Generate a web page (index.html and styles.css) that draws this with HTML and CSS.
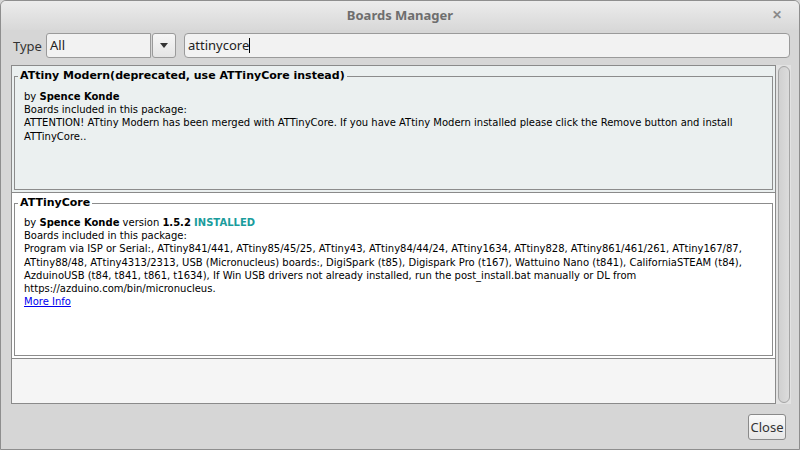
FILE: index.html
```html
<!DOCTYPE html>
<html>
<head>
<meta charset="utf-8">
<link rel="stylesheet" href="styles.css">
</head>
<body>
<div class="window">
  <div class="titlebar">
    <span class="title">Boards Manager</span>
    <span class="xbtn">✕</span>
  </div>
  <div class="toolbar">
    <span class="type-label">Type</span>
    <div class="combo">
      <div class="combo-field">All</div>
      <div class="combo-btn"><span class="arrow"></span></div>
    </div>
    <div class="search">attinycore<span class="caret"></span></div>
  </div>
  <div class="list-row">
    <div class="list">
      <div class="item item-deprecated">
        <fieldset class="pkg pkg-1">
          <legend>ATtiny Modern(deprecated, use ATTinyCore instead)</legend>
          <div class="pkg-body">
            <div>by <b>Spence Konde</b></div>
            <div>Boards included in this package:</div>
            <div>ATTENTION! ATtiny Modern has been merged with ATTinyCore. If you have ATtiny Modern installed please click the Remove button and install ATTinyCore..</div>
          </div>
        </fieldset>
      </div>
      <div class="item item-installed">
        <fieldset class="pkg pkg-2">
          <legend>ATTinyCore</legend>
          <div class="pkg-body">
            <div>by <b>Spence Konde</b> version <b>1.5.2</b> <b class="installed">INSTALLED</b></div>
            <div>Boards included in this package:</div>
            <div>Program via ISP or Serial:, ATtiny841/441, ATtiny85/45/25, ATtiny43, ATtiny84/44/24, ATtiny1634, ATtiny828, ATtiny861/461/261, ATtiny167/87, ATtiny88/48, ATtiny4313/2313, USB (Micronucleus) boards:, DigiSpark (t85), Digispark Pro (t167), Wattuino Nano (t841), CaliforniaSTEAM (t84), AzduinoUSB (t84, t841, t861, t1634), If Win USB drivers not already installed, run the post_install.bat manually or DL from https://azduino.com/bin/micronucleus.</div>
            <div><a class="more" href="#">More Info</a></div>
          </div>
        </fieldset>
      </div>
      <div class="item item-empty"></div>
    </div>
    <div class="scrollbar"><div class="track"></div></div>
  </div>
  <div class="footer">
    <button class="close">Close</button>
  </div>
</div>
</body>
</html>
```
FILE: styles.css
```css
html, body {
  margin: 0;
  padding: 0;
  width: 800px;
  height: 450px;
  overflow: hidden;
  background: #d6d6d6;
}
.window {
  box-sizing: border-box;
  width: 800px;
  height: 450px;
  border: 1px solid #8e8e8e;
  border-radius: 6px 6px 0 0;
  background: #d6d6d6;
  display: flex;
  flex-direction: column;
  font-family: "Noto Sans", "Open Sans", sans-serif;
}
.titlebar {
  height: 28px;
  padding-bottom: 1px;
  flex: none;
  display: flex;
  align-items: center;
  justify-content: center;
  position: relative;
  border-radius: 5px 5px 0 0;
  background: linear-gradient(#ececec, #d8d8d8);
}
.title {
  font-weight: bold;
  font-size: 13px;
  color: #6e6e6e;
}
.xbtn {
  position: absolute;
  right: 17px;
  top: 5px;
  font-size: 12px;
  font-weight: bold;
  color: #8a8a8a;
}
.toolbar {
  flex: none;
  display: flex;
  align-items: center;
  height: 25px;
  margin-top: 3px;
  padding-left: 12px;
  padding-right: 9px;
}
.type-label {
  font-size: 13px;
  color: #333;
  width: 33px;
}
.combo {
  display: flex;
  align-items: center;
  height: 25px;
}
.combo-field {
  box-sizing: border-box;
  width: 105px;
  height: 25px;
  border: 1px solid #9a9a9a;
  border-radius: 3px 0 0 3px;
  background: #f2f2f2;
  font-size: 13px;
  line-height: 23px;
  padding-left: 3px;
  color: #222;
}
.combo-btn {
  box-sizing: border-box;
  width: 24px;
  height: 25px;
  margin-left: 1px;
  border: 1px solid #9a9a9a;
  border-radius: 3px;
  background: linear-gradient(#f6f6f6, #e4e4e4);
  display: flex;
  align-items: center;
  justify-content: center;
}
.arrow {
  width: 0;
  height: 0;
  border-left: 4px solid transparent;
  border-right: 4px solid transparent;
  border-top: 5px solid #333;
}
.search {
  box-sizing: border-box;
  flex: 1;
  margin-left: 8px;
  height: 25px;
  border: 1px solid #9a9a9a;
  border-radius: 4px;
  background: #f2f2f2;
  font-size: 13px;
  line-height: 23px;
  padding-left: 3px;
  color: #222;
  display: flex;
  align-items: center;
}
.caret {
  display: inline-block;
  width: 1px;
  height: 15px;
  background: #000;
}
.list-row {
  flex: none;
  display: flex;
  margin-top: 7px;
  margin-left: 10px;
  height: 339px;
}
.list {
  box-sizing: border-box;
  width: 765px;
  height: 339px;
  border: 1px solid #8a8a8a;
  background: #f5f5f5;
  display: flex;
  flex-direction: column;
  font-family: "DejaVu Sans", sans-serif;
  font-size: 10px;
  color: #000;
}
.item {
  flex: none;
  box-sizing: border-box;
  padding: 2px 2px 2px 2px;
  border-bottom: 1px solid #8a8a8a;
}
.item-deprecated {
  height: 127px;
  background: #ebf0f0;
}
.item-installed {
  height: 166px;
  background: #fff;
}
.item-empty {
  flex: 1;
  border-bottom: none;
  background: #f5f5f5;
}
.pkg {
  box-sizing: border-box;
  margin: 0;
  padding: 0;
  border: 1px solid #8c8c8c;
  height: 100%;
  min-width: 0;
}
.pkg legend {
  font-weight: bold;
  font-size: 11px;
  margin-left: 3px;
  padding: 0 2px;
  line-height: 16px;
}
.pkg-body {
  padding: 6px 30px 0 9px;
  line-height: 13.2px;
}
.pkg-2 .pkg-body {
  padding-top: 5px;
}
.installed {
  color: #1a9c9c;
}
.more {
  color: #0000ee;
  text-decoration: underline;
}
.scrollbar {
  box-sizing: border-box;
  width: 15px;
  height: 339px;
  padding: 1px 1px 1px 2px;
  background: #e2e2e2;
}
.track {
  box-sizing: border-box;
  width: 12px;
  height: 100%;
  border: 1px solid #a4a4a4;
  border-radius: 6px;
  background: linear-gradient(90deg, #d0d0d0, #dcdcdc);
}
.footer {
  flex: none;
  display: flex;
  justify-content: flex-end;
  padding-right: 13px;
  margin-top: 10px;
}
.close {
  box-sizing: border-box;
  width: 38px;
  height: 26px;
  padding: 0;
  border: 1px solid #8a8a8a;
  border-radius: 3px;
  background: linear-gradient(#fafafa, #e6e6e6);
  font-family: "Noto Sans", "Open Sans", sans-serif;
  font-size: 13px;
  color: #333;
}
```
